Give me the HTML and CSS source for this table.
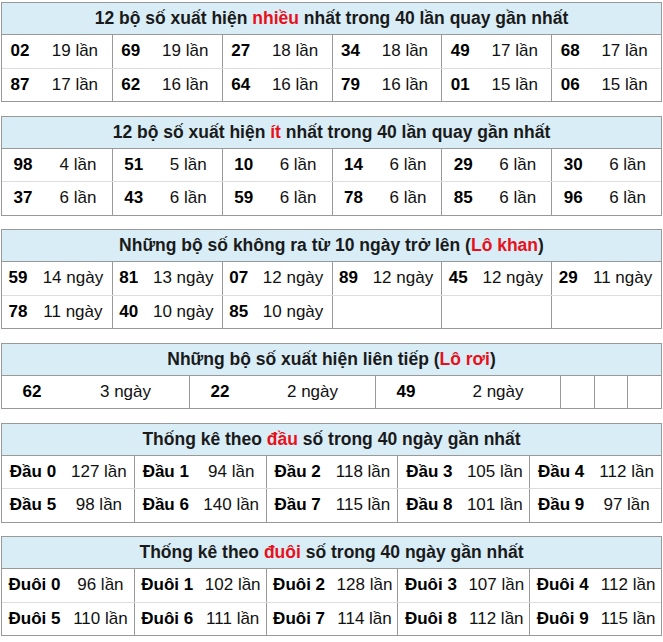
FILE: index.html
```html
<!DOCTYPE html>
<html lang="vi">
<head>
<meta charset="utf-8">
<title>Thống kê</title>
<link rel="stylesheet" href="styles.css">
</head>
<body>
<div class="page">

  <section class="tbl t-most">
    <div class="head">12 bộ số xuất hiện <span class="hl">nhiều</span> nhất trong 40 lần quay gần nhất</div>
    <div class="row">
      <div class="pair"><b>02</b><span>19 lần</span></div>
      <div class="pair"><b>69</b><span>19 lần</span></div>
      <div class="pair"><b>27</b><span>18 lần</span></div>
      <div class="pair"><b>34</b><span>18 lần</span></div>
      <div class="pair"><b>49</b><span>17 lần</span></div>
      <div class="pair"><b>68</b><span>17 lần</span></div>
    </div>
    <div class="row">
      <div class="pair"><b>87</b><span>17 lần</span></div>
      <div class="pair"><b>62</b><span>16 lần</span></div>
      <div class="pair"><b>64</b><span>16 lần</span></div>
      <div class="pair"><b>79</b><span>16 lần</span></div>
      <div class="pair"><b>01</b><span>15 lần</span></div>
      <div class="pair"><b>06</b><span>15 lần</span></div>
    </div>
  </section>

  <section class="tbl t-least">
    <div class="head">12 bộ số xuất hiện <span class="hl">ít</span> nhất trong 40 lần quay gần nhất</div>
    <div class="row">
      <div class="pair"><b>98</b><span>4 lần</span></div>
      <div class="pair"><b>51</b><span>5 lần</span></div>
      <div class="pair"><b>10</b><span>6 lần</span></div>
      <div class="pair"><b>14</b><span>6 lần</span></div>
      <div class="pair"><b>29</b><span>6 lần</span></div>
      <div class="pair"><b>30</b><span>6 lần</span></div>
    </div>
    <div class="row">
      <div class="pair"><b>37</b><span>6 lần</span></div>
      <div class="pair"><b>43</b><span>6 lần</span></div>
      <div class="pair"><b>59</b><span>6 lần</span></div>
      <div class="pair"><b>78</b><span>6 lần</span></div>
      <div class="pair"><b>85</b><span>6 lần</span></div>
      <div class="pair"><b>96</b><span>6 lần</span></div>
    </div>
  </section>

  <section class="tbl t-khan">
    <div class="head">Những bộ số không ra từ 10 ngày trở lên (<span class="hl">Lô khan</span>)</div>
    <div class="row">
      <div class="pair"><b>59</b><span>14 ngày</span></div>
      <div class="pair"><b>81</b><span>13 ngày</span></div>
      <div class="pair"><b>07</b><span>12 ngày</span></div>
      <div class="pair"><b>89</b><span>12 ngày</span></div>
      <div class="pair"><b>45</b><span>12 ngày</span></div>
      <div class="pair"><b>29</b><span>11 ngày</span></div>
    </div>
    <div class="row">
      <div class="pair"><b>78</b><span>11 ngày</span></div>
      <div class="pair"><b>40</b><span>10 ngày</span></div>
      <div class="pair"><b>85</b><span>10 ngày</span></div>
      <div class="pair"></div>
      <div class="pair"></div>
      <div class="pair"></div>
    </div>
  </section>

  <section class="tbl t-roi">
    <div class="head">Những bộ số xuất hiện liên tiếp (<span class="hl">Lô rơi</span>)</div>
    <div class="row">
      <div class="pair"><b>62</b><span>3 ngày</span></div>
      <div class="pair"><b>22</b><span>2 ngày</span></div>
      <div class="pair"><b>49</b><span>2 ngày</span></div>
      <div class="pair"></div>
      <div class="pair"></div>
      <div class="pair"></div>
    </div>
  </section>

  <section class="tbl t-dau">
    <div class="head">Thống kê theo <span class="hl">đầu</span> số trong 40 ngày gần nhất</div>
    <div class="row">
      <div class="pair"><b>Đầu 0</b><span>127 lần</span></div>
      <div class="pair"><b>Đầu 1</b><span>94 lần</span></div>
      <div class="pair"><b>Đầu 2</b><span>118 lần</span></div>
      <div class="pair"><b>Đầu 3</b><span>105 lần</span></div>
      <div class="pair"><b>Đầu 4</b><span>112 lần</span></div>
    </div>
    <div class="row">
      <div class="pair"><b>Đầu 5</b><span>98 lần</span></div>
      <div class="pair"><b>Đầu 6</b><span>140 lần</span></div>
      <div class="pair"><b>Đầu 7</b><span>115 lần</span></div>
      <div class="pair"><b>Đầu 8</b><span>101 lần</span></div>
      <div class="pair"><b>Đầu 9</b><span>97 lần</span></div>
    </div>
  </section>

  <section class="tbl t-duoi">
    <div class="head">Thống kê theo <span class="hl">đuôi</span> số trong 40 ngày gần nhất</div>
    <div class="row">
      <div class="pair"><b>Đuôi 0</b><span>96 lần</span></div>
      <div class="pair"><b>Đuôi 1</b><span>102 lần</span></div>
      <div class="pair"><b>Đuôi 2</b><span>128 lần</span></div>
      <div class="pair"><b>Đuôi 3</b><span>107 lần</span></div>
      <div class="pair"><b>Đuôi 4</b><span>112 lần</span></div>
    </div>
    <div class="row">
      <div class="pair"><b>Đuôi 5</b><span>110 lần</span></div>
      <div class="pair"><b>Đuôi 6</b><span>111 lần</span></div>
      <div class="pair"><b>Đuôi 7</b><span>114 lần</span></div>
      <div class="pair"><b>Đuôi 8</b><span>112 lần</span></div>
      <div class="pair"><b>Đuôi 9</b><span>115 lần</span></div>
    </div>
  </section>

</div>
</body>
</html>
```

FILE: styles.css
```css
html, body {
  margin: 0;
  padding: 0;
  background: #fff;
}

body {
  font-family: "Liberation Sans", Arial, sans-serif;
  font-size: 17px;
  color: #111;
}

.page {
  padding: 2px 1px 0 1px;
  display: flex;
  flex-direction: column;
  gap: 13.5px;
}

.tbl {
  border: 1px solid #999;
  --nw: 36px;
}

.head {
  height: 31px;
  line-height: 31px;
  background: #d9edf7;
  border-bottom: 1px solid #999;
  text-align: center;
  white-space: nowrap;
  font-size: 17.5px;
  font-weight: bold;
  color: #1a1a1a;
}

.hl {
  color: #e8101a;
}

.row {
  display: grid;
  grid-template-columns: repeat(6, 1fr);
  height: 32.5px;
}

.row + .row {
  border-top: 1px solid #ddd;
}

.pair {
  display: grid;
  grid-template-columns: var(--nw) 1fr;
  align-items: center;
  text-align: center;
  white-space: nowrap;
  min-width: 0;
}

.pair + .pair {
  border-left: 1px solid #999;
}

.pair b {
  font-weight: bold;
  color: #000;
}

.pair span {
  color: #111;
}

.t-most { --nw: 36px; }
.t-least { --nw: 42px; }
.t-khan { --nw: 32px; }

.t-roi { --nw: 60px; }
.t-roi .row {
  grid-template-columns: 187px 186px 185px 1fr 1fr 1fr;
}

.t-dau .row,
.t-duoi .row {
  grid-template-columns: repeat(5, 1fr);
}
.t-dau { --nw: 62px; }
.t-duoi { --nw: 65px; }
```
